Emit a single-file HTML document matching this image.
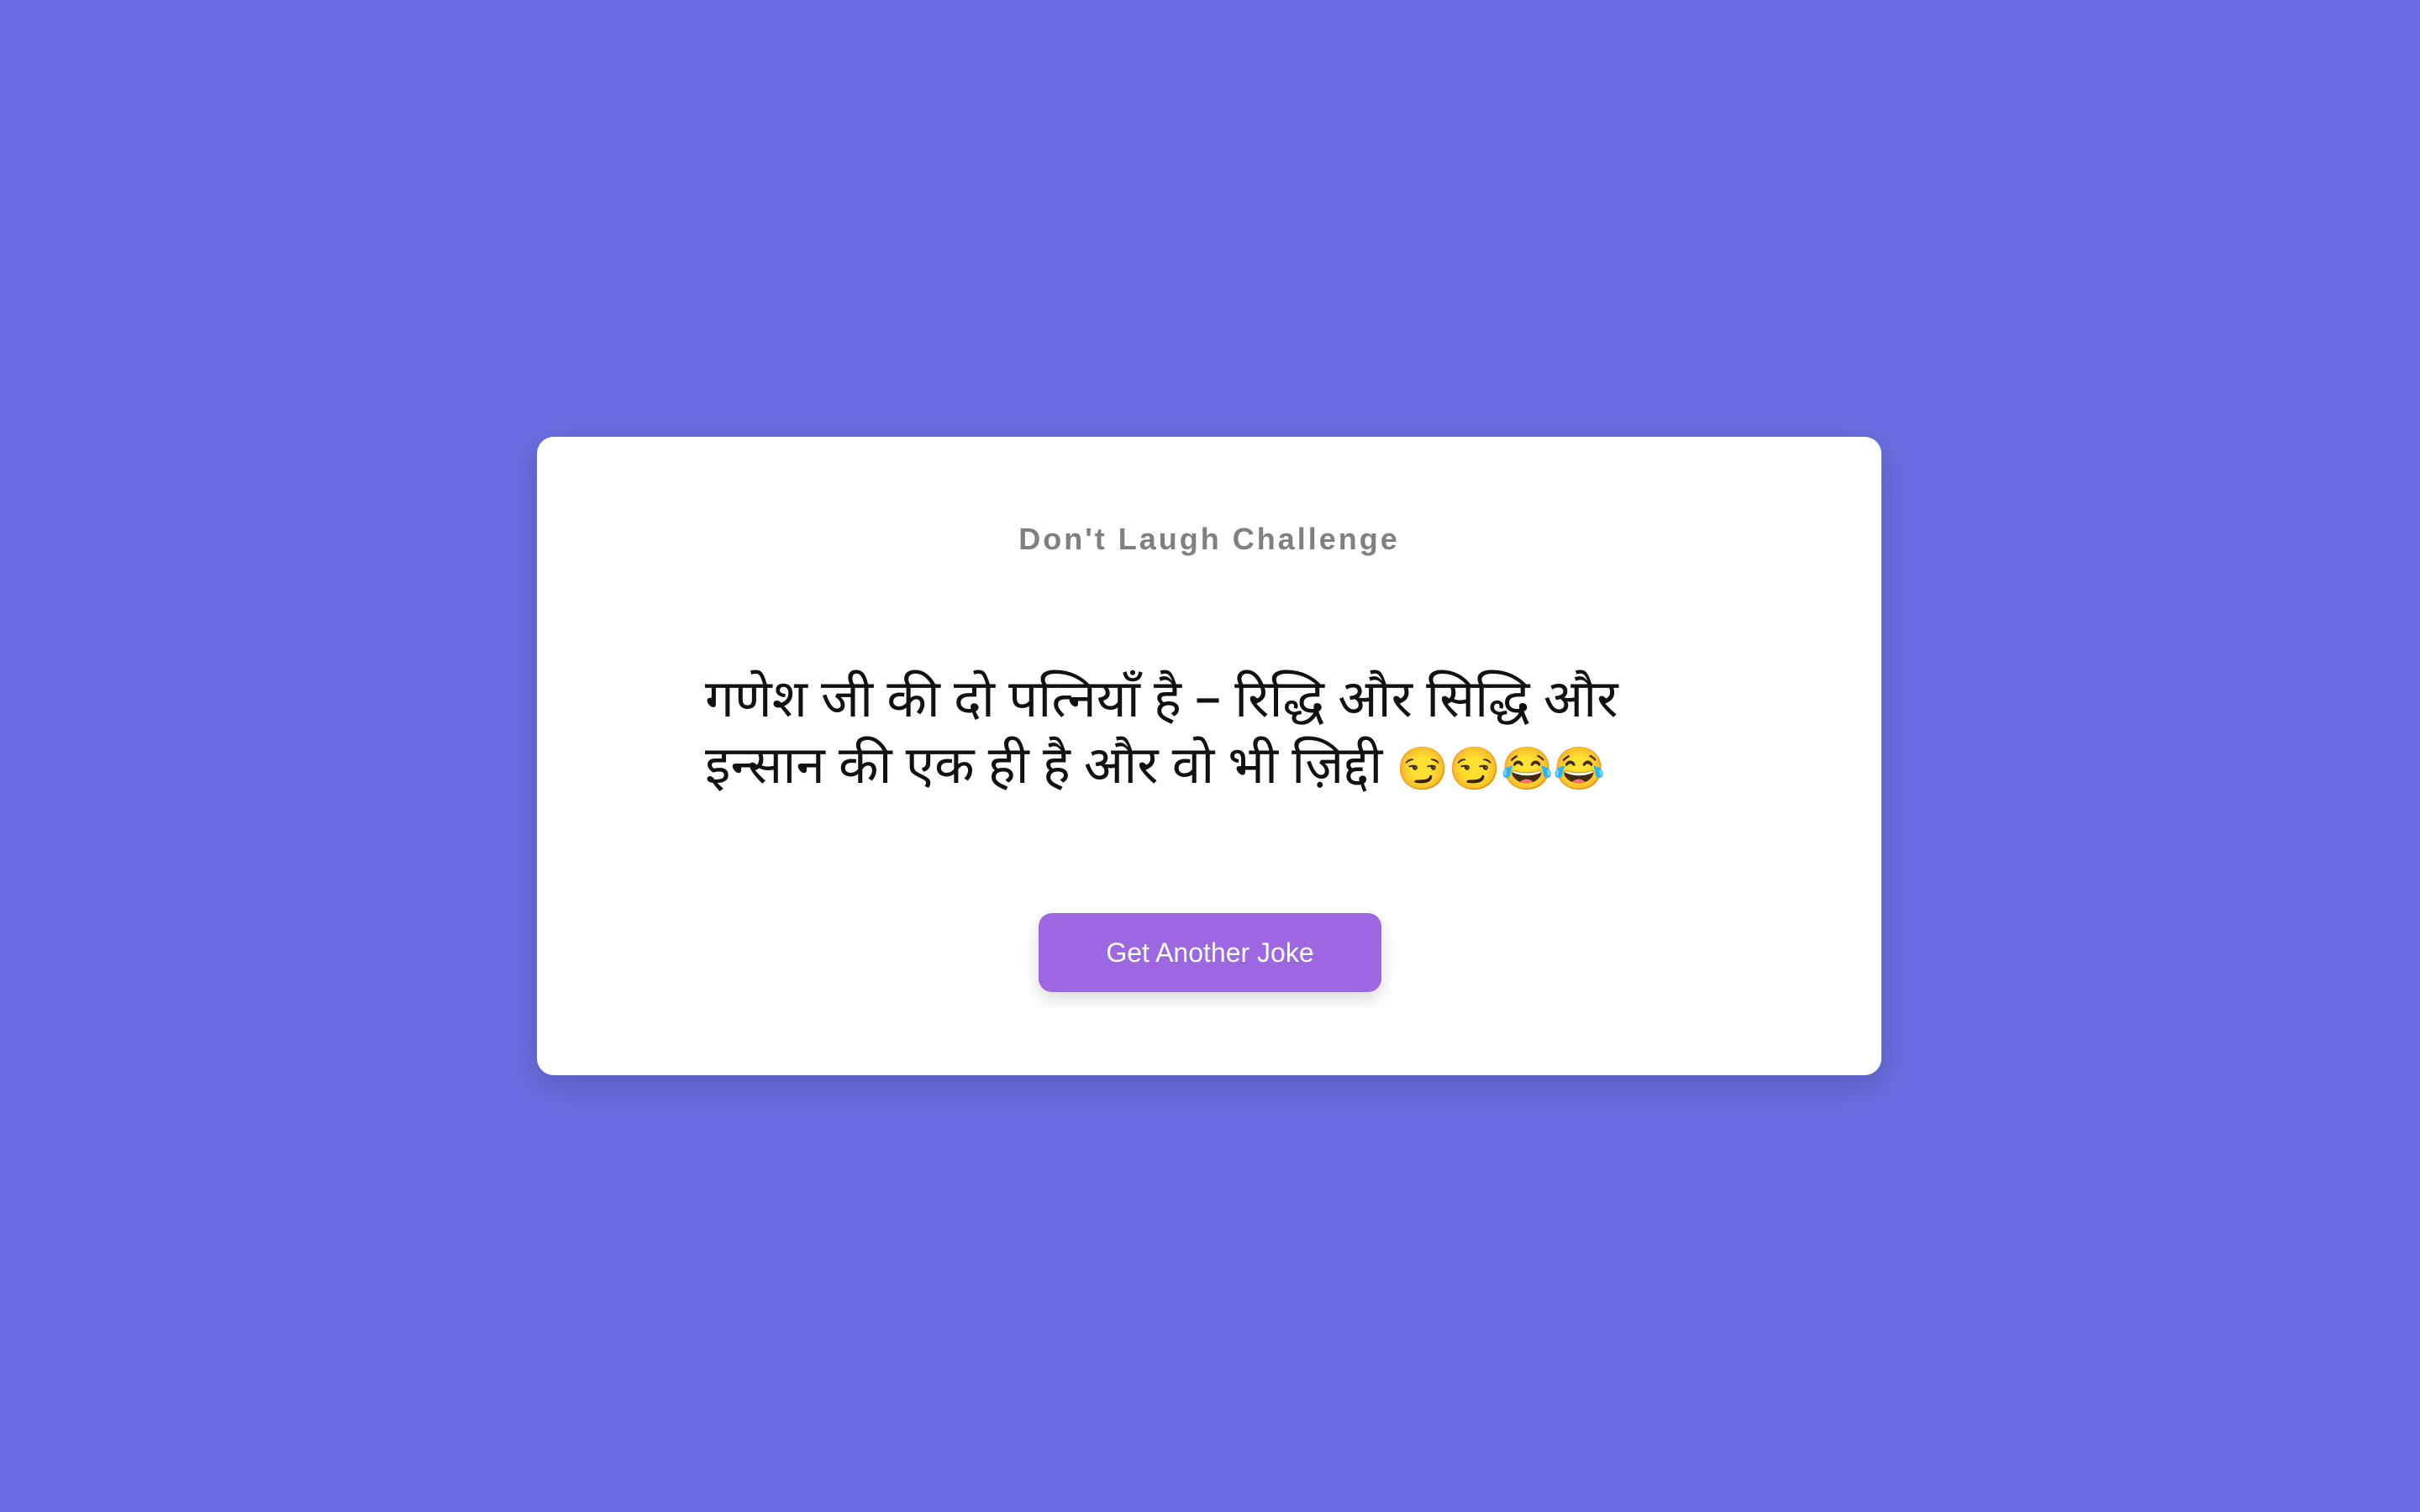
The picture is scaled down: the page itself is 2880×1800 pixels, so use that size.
<!DOCTYPE html>
<html><head><meta charset="utf-8"><style>
html,body{margin:0;padding:0;width:2880px;height:1800px;background:#6a6ee2;overflow:hidden}
.card{position:absolute;left:639px;top:520px;width:1600px;height:760px;background:#fff;border-radius:20px;box-shadow:0 12px 40px rgba(0,0,0,.18)}
.title{position:absolute;left:0;right:0;top:101px;text-align:center;font:bold 36px "Liberation Sans",sans-serif;letter-spacing:3px;color:#808080}
.joke{position:absolute;left:200px;top:279px;width:1300px;white-space:nowrap;font:62px/79px "Noto Sans Devanagari","Lohit Devanagari","Mukta","Liberation Sans","Noto Color Emoji",sans-serif;color:#111}
.emo{font-size:50px}
.btn{position:absolute;left:597px;top:567px;width:408px;height:94px;background:#9c67e0;border-radius:16px;color:#fff;font:32px/94px "Liberation Sans",sans-serif;text-align:center;box-shadow:0 8px 20px rgba(0,0,0,.15)}
</style></head><body>
<div class="card">
<div class="title">Don't Laugh Challenge</div>
<div class="joke">गणेश जी की दो पत्नियाँ है – रिद्धि और सिद्धि और<br>इन्सान की एक ही है और वो भी ज़िद्दी <span class="emo">😏😏😂😂</span></div>
<div class="btn">Get Another Joke</div>
</div>
</body></html>
